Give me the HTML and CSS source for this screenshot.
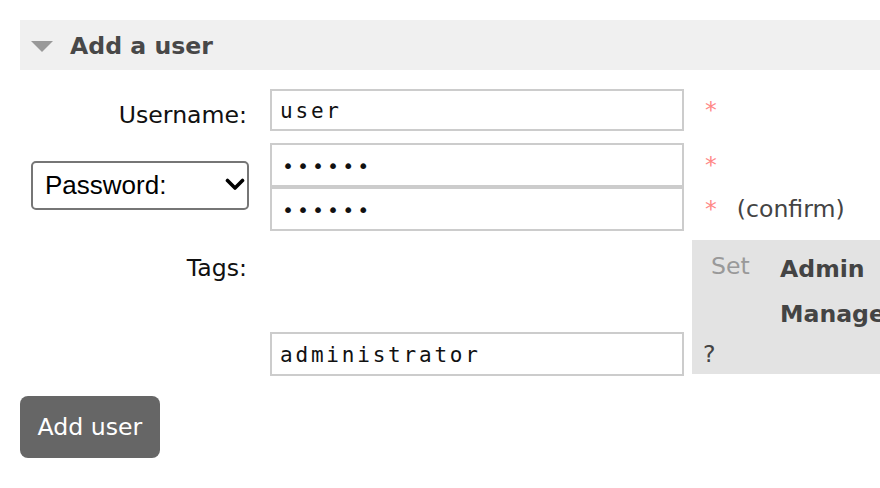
FILE: index.html
```html
<!DOCTYPE html>
<html lang="en">
<head>
<meta charset="utf-8">
<title>Add a user</title>
<link rel="stylesheet" href="styles.css">
</head>
<body>
<div class="page">
  <div class="section-head">
    <span class="tri"></span>
    <h2 class="title">Add a user</h2>
  </div>
  <form class="form">
    <label class="lbl r1">Username:</label>
    <input class="field r1 c2 short" type="text" value="user">
    <span class="extra r1"><span class="mand">*</span></span>

    <div class="sel-wrap">
      <select class="sel"><option>Password:</option></select>
      <svg class="chev" width="20" height="13" viewBox="0 0 20 13" aria-hidden="true">
        <path d="M2.5 2.5 L10 10 L17.5 2.5" fill="none" stroke="#000" stroke-width="3.6" stroke-linecap="round" stroke-linejoin="round"/>
      </svg>
    </div>
    <input class="field r2 c2 pw1" type="password" value="secret">
    <span class="extra r2 pw1"><span class="mand">*</span></span>
    <input class="field r3 c2" type="password" value="secret">
    <span class="extra r3"><span class="mand">*</span><span class="confirm">(confirm)</span></span>

    <label class="lbl r4 tags-lbl">Tags:</label>
    <div class="mini">
      <div class="mini-grid">
        <span class="set">Set</span>
        <span class="tag">Admin</span>
        <span class="set"></span>
        <span class="tag">Management</span>
      </div>
      <span class="help">?</span>
    </div>
    <input class="field r5 c2" type="text" value="administrator">
  </form>
  <button class="btn" type="button">Add user</button>
</div>
</body>
</html>
```

FILE: styles.css
```css
html, body {
  margin: 0;
  padding: 0;
  overflow: hidden;
  background: #fff;
}
body {
  font-family: "DejaVu Sans", Verdana, sans-serif;
  font-size: 23.6px;
  color: #484848;
}
.page {
  padding: 20px 0 0 20px;
  width: 860px;
}
.section-head {
  display: flex;
  align-items: center;
  height: 50px;
  background: #f0f0f0;
  width: 900px;
}
.tri {
  width: 0;
  height: 0;
  margin-left: 11px;
  margin-top: 2px;
  border-left: 11px solid transparent;
  border-right: 11px solid transparent;
  border-top: 11px solid #999;
}
.title {
  margin: 2px 0 0 17px;
  font-size: 23.6px;
  font-weight: bold;
  color: #484848;
}
.form {
  display: grid;
  grid-template-columns: 250px 414px 1fr;
  grid-template-rows: 42px 56px 44px 101px 44px;
  margin-top: 19px;
}
.r1 { grid-row: 1; }
.r2 { grid-row: 2; }
.r3 { grid-row: 3; }
.r4 { grid-row: 4; }
.r5 { grid-row: 5; }
.c2 { grid-column: 2; }
.lbl {
  grid-column: 1;
  text-align: right;
  padding-right: 23px;
  color: #111;
  align-self: center;
  padding-top: 10px;
}
.lbl.tags-lbl {
  align-self: start;
  padding-top: 23px;
}
.field {
  box-sizing: border-box;
  width: 414px;
  height: 44px;
  margin: 0;
  border: 2px solid #ccc;
  padding: 2px 8px 0 8px;
  font-family: "DejaVu Sans Mono", monospace;
  font-size: 21px;
  letter-spacing: 2.8px;
  color: #111;
  background: #fff;
  outline: none;
}
.field[type="password"] {
  letter-spacing: 3px;
  font-size: 20px;
  padding: 2px 8px 0 10px;
}
.field.short { height: 42px; }
.form .pw1 { margin-top: 12px; }
.extra {
  grid-column: 3;
  display: flex;
  align-items: center;
  padding-left: 21px;
}
.mand {
  color: #f88;
}
.confirm {
  margin-left: 20px;
  color: #444;
}
.sel-wrap {
  grid-column: 1;
  grid-row: 2 / span 2;
  align-self: center;
  margin-top: 8px;
  margin-left: 11px;
  width: 218px;
  height: 49px;
  position: relative;
}
.sel {
  box-sizing: border-box;
  appearance: none;
  -webkit-appearance: none;
  width: 218px;
  height: 49px;
  font-family: "Liberation Sans", Arial, sans-serif;
  font-size: 26px;
  color: #000;
  border: 2px solid #767676;
  border-radius: 5px;
  background: #fff;
  padding: 0 8px 0 12px;
}
.chev {
  position: absolute;
  right: 4px;
  top: 17px;
  pointer-events: none;
}
.mini {
  grid-column: 3;
  grid-row: 4 / span 2;
  margin-top: 9px;
  margin-left: 8px;
  margin-bottom: 2px;
  background: #e3e3e3;
  width: 260px;
  display: flex;
  flex-direction: column;
  justify-content: space-between;
  padding: 10px 0 6px 0;
}
.mini-grid {
  display: grid;
  grid-template-columns: 69px auto;
  row-gap: 6px;
  padding-left: 19px;
}
.set { color: #999; line-height: 33px; }
.tag {
  font-weight: bold;
  color: #444;
  white-space: nowrap;
  line-height: 39px;
}
.help {
  padding-left: 11px;
  color: #444;
}
.btn {
  margin-top: 20px;
  height: 62px;
  padding: 0 17.5px;
  background: #666;
  color: #fff;
  border: none;
  border-radius: 8px;
  font-family: "DejaVu Sans", Verdana, sans-serif;
  font-size: 23.6px;
}
```
